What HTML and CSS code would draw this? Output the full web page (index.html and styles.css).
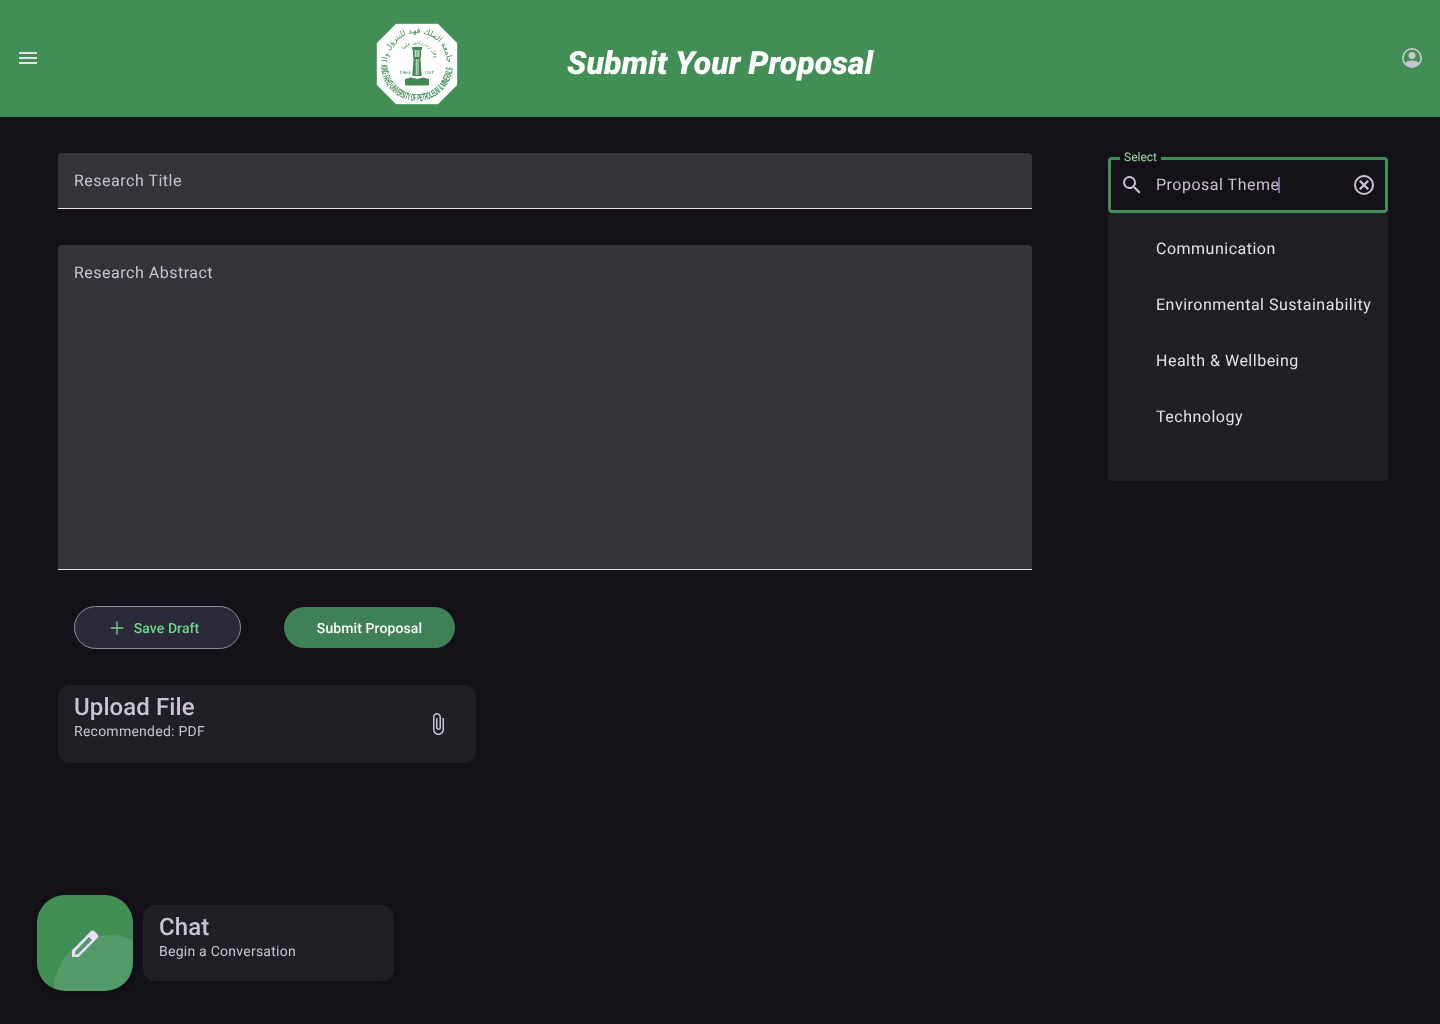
FILE: index.html
```html
<!DOCTYPE html>
<html lang="en">
<head>
<meta charset="utf-8">
<title>Submit Your Proposal</title>
<link rel="stylesheet" href="styles.css">
</head>
<body>
<div class="page">
  <header class="topbar">
    <button class="icon-btn menu-btn" aria-label="Menu">
      <svg width="24" height="24" viewBox="0 0 24 24"><path fill="#e6e0e9" d="M3 18h18v-2H3v2zm0-5h18v-2H3v2zm0-7v2h18V6H3z"/></svg>
    </button>
    <div class="logo">
      <svg width="84" height="84" viewBox="0 0 84 84">
        <defs>
          <path id="ring-top" d="M12 41A30 30 0 1 1 72 41"/>
          <path id="ring-inner" d="M24 36A18.500 18.500 0 0 1 60 36"/>
          <path id="ring-low" d="M6 43A36 36 0 0 0 78 43"/>
        </defs>
        <polygon class="logo-plate" points="21,2 63,2 82,21 82,63 63,82 21,82 2,63 2,21"/>
        <text class="logo-arabic-outer" direction="rtl"><textPath href="#ring-top" startOffset="100%" text-anchor="start">جامعة الملك فهد للبترول والمعادن</textPath></text>
        <text class="logo-arabic-inner" direction="rtl"><textPath href="#ring-inner" startOffset="100%" text-anchor="start">وقل رب زدني علما</textPath></text>
        <text class="logo-latin"><textPath href="#ring-low" textLength="110" lengthAdjust="spacingAndGlyphs">KING FAHD UNIVERSITY OF PETROLEUM &amp; MINERALS</textPath></text>
        <path class="logo-mark" d="M37 25h10v2l-1 1v7l-.6 1 1.300 18h-9.400l1.300-18-.6-1v-7l-1-1z"/>
        <path class="logo-cut" d="M39.800 28h.9v7h-.9zM41.600 28h.9v7h-.9zM43.400 28h.9v7h-.9zM40.800 37h.8v16h-.8zM42.600 37h.8v16h-.8z"/>
        <path class="logo-mark" d="M30 57l6-1.500 6 1.500 6-1.500 6 1.500v6l-2 .4H32l-2-.4z"/>
        <text class="logo-year" x="30" y="51.500" text-anchor="middle">1963</text>
        <text class="logo-year" x="54" y="51.500" text-anchor="middle">١٣٨٣</text>
      </svg>
    </div>
    <h1 class="page-title">Submit Your Proposal</h1>
    <button class="icon-btn account-btn" aria-label="Account">
      <svg width="24" height="24" viewBox="0 0 24 24"><path fill="#cac4d0" d="M12 2a10 10 0 1 0 0 20 10 10 0 0 0 0-20zm0 1.800a8.200 8.200 0 0 1 6.700 12.900C16.900 15.200 14.500 14.500 12 14.500s-4.900.7-6.700 2.200A8.200 8.200 0 0 1 12 3.800z"/><circle cx="12" cy="9.500" r="3.500" fill="#cac4d0"/></svg>
    </button>
  </header>

  <main class="content">
    <section class="form-col">
      <div class="field field-title">Research Title</div>
      <div class="field field-abstract">Research Abstract</div>
      <div class="actions">
        <button class="btn-draft">
          <svg width="22" height="22" viewBox="0 0 24 24"><path fill="#6dd58c" d="M19 12.700h-6.300V19h-1.400v-6.300H5v-1.400h6.300V5h1.400v6.300H19z"/></svg>
          <span>Save Draft</span>
        </button>
        <button class="btn-submit">Submit Proposal</button>
      </div>
      <div class="card upload-card">
        <div class="card-text">
          <div class="card-head">Upload File</div>
          <div class="card-sub">Recommended: PDF</div>
        </div>
        <svg class="clip" width="24" height="24" viewBox="0 0 24 24"><path fill="#cac4d0" d="M16.500 6v11.500c0 2.210-1.790 4-4 4s-4-1.790-4-4V5c0-1.380 1.120-2.500 2.500-2.500s2.500 1.120 2.500 2.500v10.500c0 .55-.45 1-1 1s-1-.45-1-1V6H10v9.500c0 1.380 1.120 2.500 2.500 2.500s2.500-1.120 2.500-2.500V5c0-2.210-1.790-4-4-4S7 2.790 7 5v12.500c0 3.040 2.460 5.500 5.500 5.500s5.500-2.460 5.500-5.500V6h-1.500z"/></svg>
      </div>
    </section>

    <aside class="theme-col">
      <div class="select-box">
        <span class="select-label">Select</span>
        <svg class="select-search" width="24" height="24" viewBox="0 0 24 24"><path fill="#cac4d0" d="M15.500 14h-.79l-.28-.27A6.470 6.470 0 0 0 16 9.500 6.500 6.500 0 1 0 9.500 16c1.610 0 3.090-.59 4.230-1.570l.27.28v.79l5 4.990L20.490 19l-4.990-5zm-6 0C7.010 14 5 11.990 5 9.500S7.010 5 9.500 5 14 7.010 14 9.500 11.990 14 9.500 14z"/></svg>
        <span class="select-value">Proposal Theme<i class="caret"></i></span>
        <svg class="select-clear" width="24" height="24" viewBox="0 0 24 24"><circle cx="12" cy="12" r="9" fill="none" stroke="#cac4d0" stroke-width="2"/><path fill="none" stroke="#cac4d0" stroke-width="2.200" d="M7.800 7.800l8.400 8.400M16.200 7.800l-8.400 8.400"/></svg>
      </div>
      <ul class="menu">
        <li>Communication</li>
        <li>Environmental Sustainability</li>
        <li>Health &amp; Wellbeing</li>
        <li>Technology</li>
      </ul>
    </aside>
  </main>

  <footer class="chat-row">
    <button class="fab" aria-label="Chat">
      <svg width="36" height="36" viewBox="0 0 36 36"><path fill="#eaddff" fill-rule="evenodd" d="M5 32v-6.500L23.500 6.500a3 3 0 0 1 4.200 0l2.500 2.500a3 3 0 0 1 0 4.200L11.500 32zM8 29.500h2.500L25 15l-3-3L8 26.500z"/></svg>
    </button>
    <div class="card chat-card">
      <div class="card-head">Chat</div>
      <div class="card-sub">Begin a Conversation</div>
    </div>
  </footer>
</div>
</body>
</html>
```
FILE: styles.css
```css
* { box-sizing: border-box; }

html, body {
  margin: 0;
  padding: 0;
  height: 1024px;
  overflow: hidden;
  background: #141218;
  font-family: Roboto, "Liberation Sans", sans-serif;
  text-rendering: geometricPrecision;
}

button {
  font-family: inherit;
  text-rendering: inherit;
  border: 0;
  cursor: pointer;
}

.page {
  display: flex;
  flex-direction: column;
  height: 1024px;
  will-change: transform;
}

.topbar {
  flex: none;
  display: flex;
  align-items: flex-start;
  height: 117px;
  background: #428f55;
}

.icon-btn {
  width: 24px;
  height: 24px;
  padding: 0;
  background: none;
  flex: none;
  margin-top: 46px;
}

.icon-btn svg { display: block; }

.menu-btn { margin-left: 16px; }

.logo {
  flex: none;
  width: 84px;
  height: 84px;
  margin: 22px 0 0 335px;
}

.logo svg {
  display: block;
  overflow: visible;
}

.logo-plate {
  fill: #ffffff;
  stroke: rgba(255, 255, 255, 0.35);
  stroke-width: 1;
}

.logo-mark { fill: #3f8a52; }

.logo-cut { fill: #ffffff; }

.logo-latin {
  font-family: "Liberation Sans", sans-serif;
  font-size: 10px;
  font-weight: 700;
  fill: #3f8a52;
}

.logo-arabic-outer {
  font-family: "DejaVu Sans", sans-serif;
  font-size: 8px;
  fill: #3f8a52;
}

.logo-arabic-inner {
  font-family: "DejaVu Sans", sans-serif;
  font-size: 5px;
  fill: #3f8a52;
}

.logo-year {
  font-family: "DejaVu Sans", sans-serif;
  font-size: 4.500px;
  fill: #3f8a52;
}

.page-title {
  flex: 1;
  margin: 44px 0 0 108px;
  font-size: 32px;
  line-height: 38px;
  font-weight: 900;
  font-style: italic;
  color: #ffffff;
}

.account-btn { margin-right: 16px; }

.content {
  flex: 1;
  display: flex;
  align-items: flex-start;
  padding: 36px 52px 0 58px;
  min-height: 0;
}

.form-col {
  width: 974px;
  flex: none;
  display: flex;
  flex-direction: column;
}

.field {
  background: #36343b;
  border-bottom: 1px solid #e6e0e9;
  border-radius: 4px 4px 0 0;
  padding: 16px;
  font-size: 16px;
  line-height: 24px;
  letter-spacing: 0.5px;
  color: #cac4d0;
}

.field-title { height: 56px; }

.field-abstract {
  height: 325px;
  margin-top: 36px;
}

.actions {
  display: flex;
  align-items: center;
  margin-top: 36px;
  padding-left: 16px;
  height: 43px;
}

.btn-draft {
  display: flex;
  align-items: center;
  justify-content: center;
  gap: 6px;
  width: 167px;
  height: 43px;
  border: 1px solid #938f99;
  border-radius: 22px;
  background: #2c2a38;
  color: #6dd58c;
  font-size: 14px;
  font-weight: 500;
  letter-spacing: 0.1px;
  padding: 0 10px 0 0;
}

.btn-draft span {
  display: block;
  padding-top: 2px;
}

.btn-draft svg { display: block; }

.btn-submit {
  width: 171px;
  height: 41px;
  margin-left: 43px;
  padding: 2px 0 0;
  border-radius: 21px;
  background: #3f8055;
  color: #ffffff;
  font-size: 14px;
  font-weight: 500;
  letter-spacing: 0.1px;
}

.card {
  background: #211f26;
  border-radius: 12px;
}

.card-head {
  font-size: 24px;
  line-height: 28px;
  font-weight: 500;
  letter-spacing: 0.1px;
  color: #cac4d0;
}

.card-sub {
  margin-top: 1px;
  font-size: 14px;
  line-height: 20px;
  letter-spacing: 0.25px;
  color: #cac4d0;
}

.upload-card {
  display: flex;
  align-items: flex-start;
  justify-content: space-between;
  width: 418px;
  height: 78px;
  margin-top: 36px;
  padding: 8px 26px 0 16px;
}

.clip { margin-top: 19px; }

.theme-col {
  width: 280px;
  flex: none;
  margin: 4px 0 0 76px;
}

.select-box {
  position: relative;
  display: flex;
  align-items: center;
  height: 56px;
  border: 3px solid #428f55;
  border-radius: 4px;
  padding: 0 9px 0 9px;
}

.select-label {
  position: absolute;
  top: -11px;
  left: 9px;
  padding: 0 4px;
  background: #141218;
  font-size: 12px;
  line-height: 16px;
  letter-spacing: 0;
  color: #a5d6a7;
}

.select-search { flex: none; }

.select-value {
  flex: 1;
  margin-left: 12px;
  font-size: 16px;
  line-height: 24px;
  letter-spacing: 0.5px;
  color: #cac4d0;
}

.caret {
  display: inline-block;
  width: 1.500px;
  height: 16px;
  margin-left: -1px;
  vertical-align: -3px;
  background: #7e6ba8;
}

.select-clear { flex: none; }

.menu {
  list-style: none;
  margin: 0;
  padding: 8px 0 36px;
  background: #211f26;
  border-radius: 0 0 4px 4px;
}

.menu li {
  height: 56px;
  padding-left: 48px;
  font-size: 16px;
  line-height: 56px;
  letter-spacing: 0.5px;
  color: #e6e0e9;
  white-space: nowrap;
}

.chat-row {
  flex: none;
  display: flex;
  align-items: center;
  gap: 10px;
  padding: 0 0 33px 37px;
}

.fab {
  position: relative;
  overflow: hidden;
  display: flex;
  align-items: center;
  justify-content: center;
  width: 96px;
  height: 96px;
  padding: 0;
  border-radius: 28px;
  background: #418f55;
  box-shadow: 0 2px 6px rgba(0, 0, 0, 0.3);
}

.fab::after {
  content: "";
  position: absolute;
  left: 17px;
  top: 40px;
  width: 110px;
  height: 110px;
  border-radius: 50%;
  background: rgba(255, 255, 255, 0.11);
}

.fab svg { position: relative; z-index: 1; display: block; }

.chat-card {
  width: 251px;
  height: 76px;
  padding: 8px 16px 0;
}
```
